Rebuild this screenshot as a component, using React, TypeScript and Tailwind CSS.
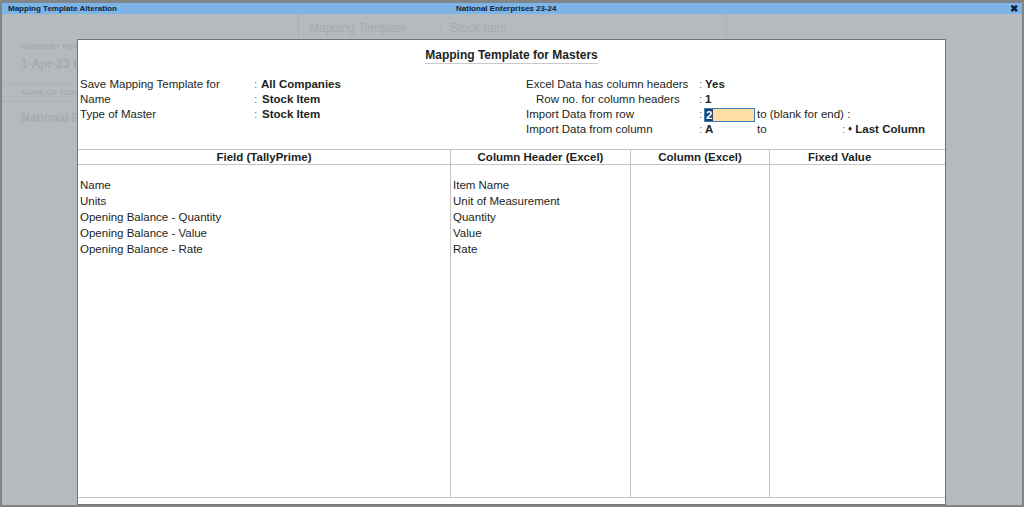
const rows = [
  ["Name", "Item Name"],
  ["Units", "Unit of Measurement"],
  ["Opening Balance - Quantity", "Quantity"],
  ["Opening Balance - Value", "Value"],
  ["Opening Balance - Rate", "Rate"],
];

function Background() {
  return (
    <div className="flex h-full text-[#a5abae] font-bold">
      <div className="w-[297px] shrink-0 border-r border-[#abb1b4]">
        <div className="mt-[28px] ml-[19px] text-[8px] leading-[10px]">CURRENT PERIOD</div>
        <div className="mt-[5px] ml-[19px] text-[12px] leading-[14px]">1-Apr-23 to 31-Mar-24</div>
        <div className="mt-[13px] border-y border-[#abb1b4] pl-[19px] text-[8px] leading-[16px]">NAME OF COMPANY</div>
        <div className="mt-[9px] ml-[19px] text-[12px] leading-[14px]">National Enterprises 23-24</div>
      </div>
      <div className="w-[428px] shrink-0 border-r border-[#abb1b4] flex font-normal text-[12px] leading-[14px] pt-[7px] pl-[10px]">
        <span className="w-[130px]">Mapping Template</span>
        <span className="w-[11px]">:</span>
        <span>Stock Item</span>
      </div>
    </div>
  );
}

function InfoRow({ label, value, indent, labelW, valueClass }: { label: string; value: React.ReactNode; indent?: boolean; labelW: string; valueClass?: string }) {
  return (
    <div className="flex h-[15px] items-center">
      <span className={`${labelW} ${indent ? "pl-[10px]" : ""} shrink-0`}>{label}</span>
      <span className="w-[6px] shrink-0 text-[#777]">:</span>
      <span className={`font-bold ${valueClass ?? ""}`}>{value}</span>
    </div>
  );
}

export default function App() {
  return (
    <div className="relative w-[1024px] h-[507px] overflow-hidden bg-[#b4babd] border-x-[2px] border-b-[2px] border-t-[3px] border-[#7f8589] font-['Liberation_Sans',Arial,sans-serif] text-[#1c1f22]">
      <div className="flex h-[11px] items-center justify-between bg-[#7db5e6] pl-[6px] pr-[4px] text-[8px] font-bold text-[#10243a]">
        <span className="w-[448px]">Mapping Template Alteration</span>
        <span className="flex-1">National Enterprises 23-24</span>
        <span className="text-[10px] leading-none">✖</span>
      </div>
      <div className="h-[489px]">
        <Background />
      </div>

      <div className="absolute left-[75px] top-[36px] w-[869px] h-[466px] flex flex-col bg-white border border-[#6f7477] text-[11.5px]">
        <div className="h-[109px] shrink-0">
          <div className="flex justify-center pt-[8px]">
            <span className="border-b border-[#c9c9c9] text-[12px] font-bold leading-[15px]">Mapping Template for Masters</span>
          </div>
          <div className="flex pt-[13px] pl-[2px]">
            <div className="w-[446px] shrink-0">
              <InfoRow label="Save Mapping Template for" value="All Companies" labelW="w-[174px]" valueClass="ml-[1px]" />
              <InfoRow label="Name" value="Stock Item" labelW="w-[174px]" valueClass="ml-[2px]" />
              <InfoRow label="Type of Master" value="Stock Item" labelW="w-[174px]" valueClass="ml-[2px]" />
            </div>
            <div>
              <InfoRow label="Excel Data has column headers" value="Yes" labelW="w-[173px]" />
              <InfoRow label="Row no. for column headers" value="1" indent labelW="w-[173px]" />
              <div className="flex h-[15px] items-center">
                <span className="w-[173px] shrink-0">Import Data from row</span>
                <span className="w-[5px] shrink-0 text-[#777]">:</span>
                <span className="flex h-[14px] w-[51px] items-center bg-[#fddfa6] border border-[#3f7fb0] font-bold leading-none">
                  <span className="bg-[#1f3f73] text-white h-[12px] px-[1px] leading-[12px]">2</span>
                </span>
                <span className="ml-[2px]">to (blank for end) :</span>
              </div>
              <div className="flex h-[15px] items-center">
                <span className="w-[173px] shrink-0">Import Data from column</span>
                <span className="w-[6px] shrink-0 text-[#777]">:</span>
                <span className="w-[52px] font-bold">A</span>
                <span className="w-[85px]">to</span>
                <span className="w-[6px] text-[#777]">:</span>
                <span className="font-bold whitespace-nowrap"><span className="text-[8px] align-[2px]">♦</span> Last Column</span>
              </div>
            </div>
          </div>
        </div>

        <div className="flex-1 flex flex-col min-h-0 border-t border-[#c4c4c4]">
          <div className="flex-1 grid grid-cols-[373px_180px_139px_1fr] grid-rows-[15px_1fr] border-b border-[#c4c4c4]">
            <div className="border-b border-r border-[#c4c4c4] text-center font-bold leading-[14px]">Field (TallyPrime)</div>
            <div className="border-b border-r border-[#c4c4c4] text-center font-bold leading-[14px]">Column Header (Excel)</div>
            <div className="border-b border-r border-[#c4c4c4] text-center font-bold leading-[14px]">Column (Excel)</div>
            <div className="border-b border-[#c4c4c4] font-bold leading-[14px] pl-[38px]">Fixed Value</div>
            <div className="border-r border-[#c4c4c4] pt-[13px] pl-[2px]">
              {rows.map(r => <div key={r[0]} className="h-[16px] leading-[15px]">{r[0]}</div>)}
            </div>
            <div className="border-r border-[#c4c4c4] pt-[13px] pl-[2px]">
              {rows.map(r => <div key={r[1]} className="h-[16px] leading-[15px]">{r[1]}</div>)}
            </div>
            <div className="border-r border-[#c4c4c4]" />
            <div />
          </div>
          <div className="h-[6px] shrink-0" />
        </div>
      </div>
    </div>
  );
}
